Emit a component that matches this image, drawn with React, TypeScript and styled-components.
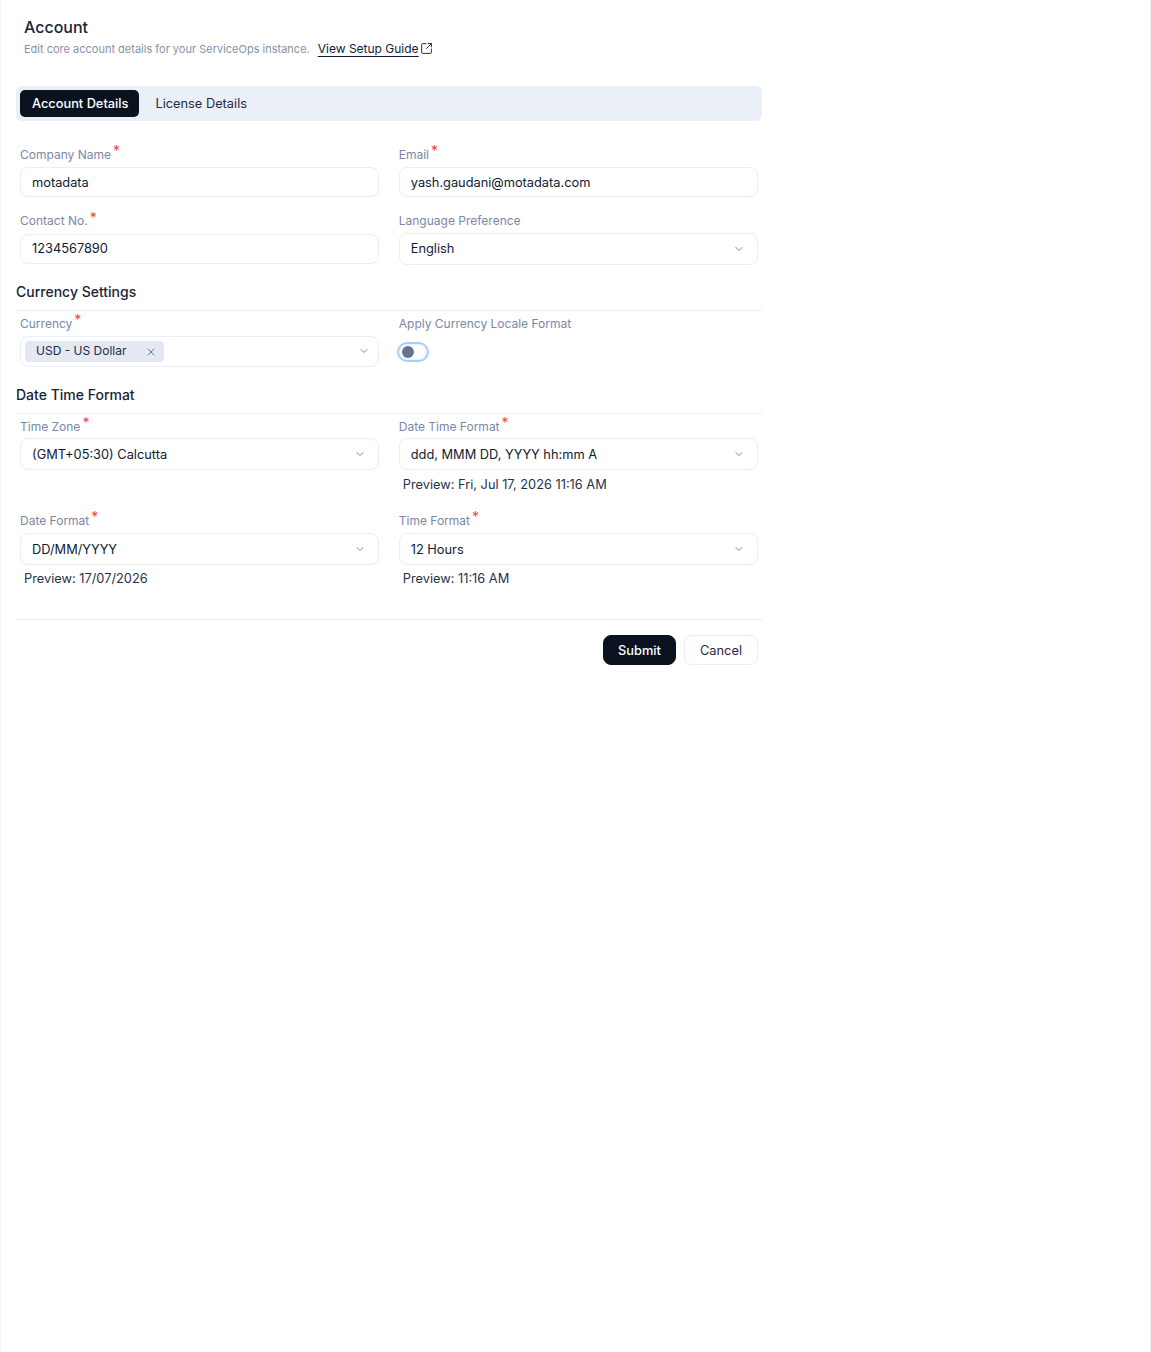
import { FC, ReactNode } from 'react';
import styled, { createGlobalStyle } from 'styled-components';
import { ChevronDown, SquareArrowOutUpRight, X } from 'lucide-react';

const ink = '#0f1b33';
const muted = '#7a88a6';
const line = '#e9edf5';

const GlobalStyle = createGlobalStyle`
  html, body {
    margin: 0;
    padding: 0;
    background: #fff;
  }
  body {
    font-family: Inter, "Noto Sans", sans-serif;
    color: ${ink};
  }
  * {
    box-sizing: border-box;
  }
`;

const Page = styled.div`
  min-height: 1352px;
  padding: 0 0 0 16px;
  border-left: 1px solid #f1f3f8;
  border-right: 1px solid #f1f3f8;
`;

const Content = styled.div`
  width: 746px;
  margin-left: -1px;
`;

const Header = styled.header`
  padding: 17px 8px 0;
  height: 86px;
`;

const Title = styled.h1`
  margin: 0;
  font-size: 16px;
  line-height: 20px;
  font-weight: 500;
  color: #1a2438;
`;

const SubRow = styled.div`
  display: flex;
  align-items: center;
  margin-top: 2.5px;
  height: 18px;
`;

const Sub = styled.span`
  font-size: 11px;
  color: #8791a5;
`;

const GuideLink = styled.a`
  display: flex;
  align-items: center;
  gap: 1px;
  margin-left: 8px;
  font-size: 12px;
  color: ${ink};

  span {
    text-decoration: underline;
    text-underline-offset: 3px;
  }
`;

const Tabs = styled.div`
  display: flex;
  align-items: center;
  height: 35px;
  padding: 0 4px;
  gap: 4px;
  background: #eaeff8;
  border-radius: 6px;
`;

const Tab = styled.div<{ $active?: boolean }>`
  height: 27px;
  padding: 0 ${({ $active }) => ($active ? '11px' : '12px')} 0 12px;
  display: flex;
  align-items: center;
  font-size: 12.8px;
  font-weight: ${({ $active }) => ($active ? 500 : 400)};
  color: ${({ $active }) => ($active ? '#fff' : '#1f2b42')};
  background: ${({ $active }) => ($active ? '#0a1220' : 'transparent')};
  border-radius: 5px;
`;

const Grid = styled.div<{ $top: number; $rowGap?: number }>`
  display: grid;
  grid-template-columns: 358.75px 358.75px;
  column-gap: 20px;
  row-gap: ${({ $rowGap = 13.5 }) => $rowGap}px;
  padding: 0 4px;
  margin-top: ${({ $top }) => $top}px;
`;

const Label = styled.label<{ $top: number }>`
  display: block;
  height: 21px;
  padding-top: ${({ $top }) => $top}px;
  font-size: 12px;
  line-height: 15px;
  color: ${muted};
`;

const Star = styled.sup`
  margin-left: 2px;
  font-size: 14px;
  line-height: 0;
  vertical-align: 2.5px;
  color: #ef4444;
`;

const ControlSlot = styled.div`
  height: 32px;
  display: flex;
  align-items: center;
`;

const Box = styled.div<{ $height: number }>`
  width: 100%;
  height: ${({ $height }) => $height}px;
  display: flex;
  align-items: center;
  justify-content: space-between;
  padding: 0 11px;
  background: #fff;
  border: 1px solid ${line};
  border-radius: 8px;
  font-size: 12.8px;
  color: ${ink};
`;

const MultiBox = styled(Box)`
  padding: 0 7px 0 4px;
`;

const Chevron = styled(ChevronDown)`
  width: 12px;
  height: 12px;
  color: #7a88a6;
  margin-right: 1px;
`;

const Chip = styled.div`
  width: 139px;
  height: 21px;
  display: flex;
  align-items: center;
  justify-content: space-between;
  padding: 0 7px 1px 11px;
  background: #e3e8f3;
  border-radius: 4px;
  font-size: 12px;
  color: #1f2b42;
`;

const ChipClose = styled(X)`
  width: 12px;
  height: 12px;
  margin-top: 2px;
  color: #6f7d99;
`;

const Toggle = styled.div`
  width: 28px;
  height: 16px;
  margin: 1px 0 0 0;
  display: flex;
  align-items: center;
  padding-left: 3px;
  background: #fff;
  border-radius: 9px;
  box-shadow: 0 0 0 2px #a5d0fb, inset 0 0 3px rgba(100, 116, 139, 0.25);
`;

const Knob = styled.div`
  width: 12px;
  height: 12px;
  border-radius: 50%;
  background: #64748f;
`;

const SectionTitle = styled.h2<{ $top: number }>`
  margin: ${({ $top }) => $top}px 0 0;
  height: 31px;
  padding-top: 3px;
  font-size: 14px;
  line-height: 18px;
  font-weight: 500;
  color: #1a2438;
  border-bottom: 1px solid ${line};
`;

const Preview = styled.div<{ $top: number }>`
  height: 28px;
  padding: ${({ $top }) => $top}px 0 0 4px;
  font-size: 12.8px;
  line-height: 18px;
  color: #26314a;
`;

const Footer = styled.footer`
  margin-top: 26px;
  padding: 15px 4px 0 0;
  display: flex;
  justify-content: flex-end;
  gap: 8px;
  border-top: 1px solid ${line};
`;

const Button = styled.button<{ $primary?: boolean }>`
  height: 30px;
  padding: 0;
  width: ${({ $primary }) => ($primary ? '73px' : '74px')};
  font-family: inherit;
  font-size: 12.8px;
  font-weight: ${({ $primary }) => ($primary ? 500 : 400)};
  color: ${({ $primary }) => ($primary ? '#fff' : '#1f2b42')};
  background: ${({ $primary }) => ($primary ? '#0a1220' : '#fff')};
  border: 1px solid ${({ $primary }) => ($primary ? '#0a1220' : line)};
  border-radius: 8px;
`;

type FieldProps = {
  label: string;
  required?: boolean;
  labelTop?: number;
  children: ReactNode;
};

const Field: FC<FieldProps> = ({ label, required, labelTop = 1.5, children }) => (
  <div>
    <Label $top={labelTop}>
      {label}
      {required && <Star>*</Star>}
    </Label>
    {children}
  </div>
);

const TextInput: FC<{ value: string }> = ({ value }) => (
  <ControlSlot>
    <Box $height={30}>{value}</Box>
  </ControlSlot>
);

const Select: FC<{ value: string }> = ({ value }) => (
  <ControlSlot>
    <Box $height={32}>
      {value}
      <Chevron />
    </Box>
  </ControlSlot>
);

const App: FC = () => (
  <>
    <GlobalStyle />
    <Page>
      <Content>
        <Header>
          <Title>Account</Title>
          <SubRow>
            <Sub>Edit core account details for your ServiceOps instance.</Sub>
            <GuideLink>
              <span>View Setup Guide</span>
              <SquareArrowOutUpRight size={13} strokeWidth={1.7} />
            </GuideLink>
          </SubRow>
        </Header>

        <Tabs>
          <Tab $active>Account Details</Tab>
          <Tab>License Details</Tab>
        </Tabs>

        <Grid $top={24}>
          <Field label="Company Name" required>
            <TextInput value="motadata" />
          </Field>
          <Field label="Email" required>
            <TextInput value="yash.gaudani@motadata.com" />
          </Field>
          <Field label="Contact No." required>
            <TextInput value="1234567890" />
          </Field>
          <Field label="Language Preference">
            <Select value="English" />
          </Field>
        </Grid>

        <SectionTitle $top={15.5}>Currency Settings</SectionTitle>
        <Grid $top={3}>
          <Field label="Currency" required>
            <ControlSlot>
              <MultiBox $height={31}>
                <Chip>
                  USD - US Dollar
                  <ChipClose />
                </Chip>
                <Chevron />
              </MultiBox>
            </ControlSlot>
          </Field>
          <Field label="Apply Currency Locale Format">
            <ControlSlot>
              <Toggle>
                <Knob />
              </Toggle>
            </ControlSlot>
          </Field>
        </Grid>

        <SectionTitle $top={16}>Date Time Format</SectionTitle>
        <Grid $top={3} $rowGap={14}>
          <Field label="Time Zone" required>
            <Select value="(GMT+05:30) Calcutta" />
          </Field>
          <Field label="Date Time Format" required>
            <Select value="ddd, MMM DD, YYYY hh:mm A" />
            <Preview $top={5.5}>Preview: Fri, Jul 17, 2026 11:16 AM</Preview>
          </Field>
          <Field label="Date Format" required labelTop={0.5}>
            <Select value="DD/MM/YYYY" />
            <Preview $top={4.5}>Preview: 17/07/2026</Preview>
          </Field>
          <Field label="Time Format" required labelTop={0.5}>
            <Select value="12 Hours" />
            <Preview $top={4.5}>Preview: 11:16 AM</Preview>
          </Field>
        </Grid>

        <Footer>
          <Button $primary>Submit</Button>
          <Button>Cancel</Button>
        </Footer>
      </Content>
    </Page>
  </>
);

export default App;
